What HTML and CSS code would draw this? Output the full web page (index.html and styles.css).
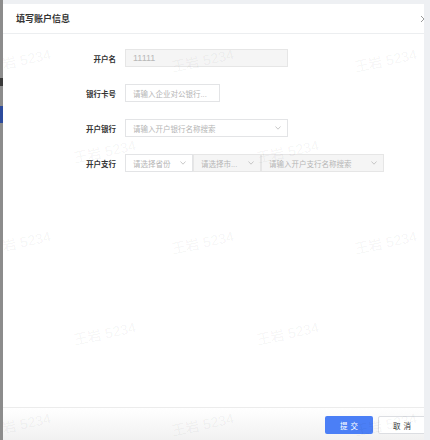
FILE: index.html
```html
<!DOCTYPE html>
<html>
	<head>
		<meta charset="UTF-8">
		<title>填写账户信息</title>
		<link rel="stylesheet" href="styles.css">
	</head>
	<body>
		<div class="screen">
			<div class="sidebar">
				<span class="sb-dark"></span>
				<span class="sb-blue"></span>
			</div>
			<div class="dialog">
				<div class="dialog-head">
					<span class="dialog-title">填写账户信息</span>
					<span class="dialog-close">
						<svg width="8" height="8" viewBox="0 0 8 8"><path d="M1 1L7 7M7 1L1 7" stroke="#999" stroke-width="1" fill="none"/></svg>
					</span>
				</div>
				<div class="dialog-body">
					<div class="form-row">
						<label class="form-label">开户名</label>
						<div class="field field-disabled w-lg"><span class="field-value">11111</span></div>
					</div>
					<div class="form-row">
						<label class="form-label">银行卡号</label>
						<div class="field w-md"><span class="field-ph">请输入企业对公银行...</span></div>
					</div>
					<div class="form-row">
						<label class="form-label">开户银行</label>
						<div class="field w-lg">
							<span class="field-ph">请输入开户银行名称搜索</span>
							<svg class="arrow" width="6" height="4" viewBox="0 0 6 4"><path d="M0.5 0.5L3 3.2L5.5 0.5" stroke="#bbb" stroke-width="0.8" fill="none"/></svg>
						</div>
					</div>
					<div class="form-row">
						<label class="form-label">开户支行</label>
						<div class="field w-sm">
							<span class="field-ph">请选择省份</span>
							<svg class="arrow" width="6" height="4" viewBox="0 0 6 4"><path d="M0.5 0.5L3 3.2L5.5 0.5" stroke="#bbb" stroke-width="0.8" fill="none"/></svg>
						</div>
						<div class="field field-disabled w-sm">
							<span class="field-ph">请选择市...</span>
							<svg class="arrow" width="6" height="4" viewBox="0 0 6 4"><path d="M0.5 0.5L3 3.2L5.5 0.5" stroke="#bbb" stroke-width="0.8" fill="none"/></svg>
						</div>
						<div class="field field-disabled w-xl">
							<span class="field-ph">请输入开户支行名称搜索</span>
							<svg class="arrow" width="6" height="4" viewBox="0 0 6 4"><path d="M0.5 0.5L3 3.2L5.5 0.5" stroke="#bbb" stroke-width="0.8" fill="none"/></svg>
						</div>
					</div>
				</div>
				<div class="dialog-foot">
					<span class="btn btn-primary">提交</span>
					<span class="btn btn-default">取消</span>
				</div>

				<!-- 水印 -->
				<div class="watermark">
					<div class="wm-row"><span class="wm first">王岩 5234</span><span class="wm">王岩 5234</span><span class="wm">王岩 5234</span></div>
					<div class="wm-row alt"><span class="wm">王岩 5234</span><span class="wm">王岩 5234</span></div>
					<div class="wm-row"><span class="wm first">王岩 5234</span><span class="wm">王岩 5234</span><span class="wm">王岩 5234</span></div>
					<div class="wm-row alt"><span class="wm">王岩 5234</span><span class="wm">王岩 5234</span></div>
					<div class="wm-row"><span class="wm first">王岩 5234</span><span class="wm">王岩 5234</span><span class="wm">王岩 5234</span></div>
				</div>
			</div>
		</div>
	</body>
</html>
```

FILE: styles.css
```css
html,body{margin:0;padding:0;}
body{
	background-color:#eef0f3;
	font-family:"Liberation Sans","Noto Sans CJK SC",sans-serif;
	color:#333;
	height:440px;
	overflow:hidden;
}
.screen{display:flex;height:440px;}

.sidebar{
	width:3px;
	background-color:#8c8c8c;
	display:flex;
	flex-direction:column;
	padding-top:78px;
}
.sb-dark{height:8px;background-color:#3a3a3a;}
.sb-blue{height:17px;margin-top:20px;background-color:#2d4b9c;}

.dialog{
	width:421px;
	margin-top:4px;
	background-color:#fff;
	display:flex;
	flex-direction:column;
	position:relative;
	overflow:hidden;
}
.dialog-head{
	height:29px;
	border-bottom:1px solid #eceef0;
	display:flex;
	align-items:center;
	justify-content:space-between;
	padding-left:13px;
	flex-shrink:0;
}
.dialog-title{font-size:9px;font-weight:bold;color:#333;}
.dialog-close{display:flex;margin-right:-4px;}

.dialog-body{flex:1;padding-top:15px;}
.form-row{display:flex;align-items:center;height:18px;margin-bottom:17px;}
.form-label{
	width:113px;
	margin-right:9px;
	text-align:right;
	font-size:7.5px;
	font-weight:bold;
	color:#333;
}
.field{
	box-sizing:border-box;
	height:18px;
	border:1px solid #e3e4e6;
	background-color:#fff;
	display:flex;
	align-items:center;
	justify-content:space-between;
	padding:0 6px 0 7px;
	font-size:7.5px;
	flex-shrink:0;
}
.field-disabled{background-color:#f5f5f5;border-color:#e6e6e6;}
.field-value{color:#b8b8b8;font-size:9px;}
.field-ph{color:#b5b5b5;white-space:nowrap;}
.arrow{display:block;}
.w-lg{width:163px;}
.w-md{width:95px;}
.w-sm{width:68px;}
.w-xl{width:123px;}

.dialog-foot{
	height:33px;
	box-sizing:border-box;
	border-top:1px solid #ececec;
	display:flex;
	justify-content:flex-end;
	align-items:flex-start;
	gap:5px;
	padding-top:8px;
	background:linear-gradient(#fff,#f1f1f1);
	flex-shrink:0;
}
.btn{
	box-sizing:border-box;
	width:48px;
	height:18px;
	border-radius:2px;
	display:flex;
	align-items:center;
	justify-content:center;
	font-size:7.5px;
	letter-spacing:3px;
	text-indent:3px;
}
.btn-primary{background-color:#4b7ff6;color:#fff;}
.btn-default{background-color:#fff;border:1px solid #dcdee2;color:#333;margin-right:-2px;}

.watermark{
	position:absolute;
	left:0;top:0;right:0;bottom:0;
	pointer-events:none;
	display:flex;
	flex-direction:column;
	padding-top:10px;
}
.wm-row{height:91px;display:flex;align-items:center;flex-shrink:0;}
.wm-row.alt{padding-left:70px;}
.wm{
	width:60px;
	flex-shrink:0;
	margin-right:123px;
	font-size:14px;
	color:rgba(0,0,0,0.055);
	white-space:nowrap;
	transform:rotate(-12deg);
}
.wm.first{margin-left:-15px;}
```
